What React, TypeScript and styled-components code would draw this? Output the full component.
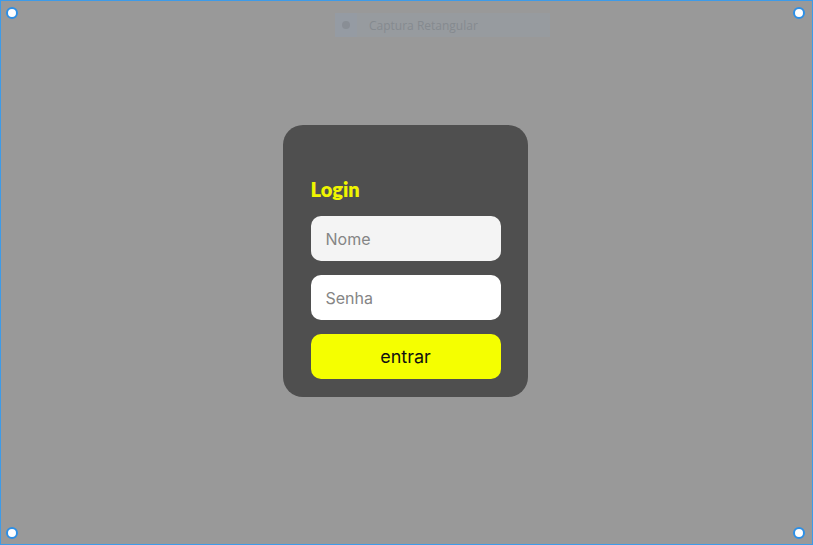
import React from "react";
import styled, { createGlobalStyle } from "styled-components";

const GlobalStyle = createGlobalStyle`
  html, body {
    margin: 0;
    padding: 0;
    height: 100%;
  }
  #root {
    height: 100%;
  }
`;

const Screen = styled.div`
  position: relative;
  box-sizing: border-box;
  width: 813px;
  height: 545px;
  background-color: #999999;
  border: 1px solid #3d9be9;
  display: flex;
  flex-direction: column;
  align-items: center;
  font-family: Inter, "Liberation Sans", sans-serif;
`;

const CaptureBar = styled.div`
  margin-top: 12px;
  margin-left: 72px;
  width: 215px;
  height: 24px;
  display: flex;
  align-items: stretch;
  background-color: #979b9f;
  color: #858a8f;
  font-size: 12px;
`;

const CaptureIcon = styled.div`
  width: 22px;
  display: flex;
  align-items: center;
  justify-content: center;
  background-color: #959ba3;

  span {
    width: 8px;
    height: 8px;
    border-radius: 50%;
    background-color: #898e95;
  }
`;

const CaptureText = styled.div`
  flex: 1;
  display: flex;
  align-items: center;
  padding-left: 11px;
  margin-left: 1px;
  font-family: "Open Sans", sans-serif;
`;

const Handle = styled.div<{ $x: number; $y: number }>`
  position: absolute;
  left: ${(p) => p.$x - 7}px;
  top: ${(p) => p.$y - 6}px;
  width: 8px;
  height: 8px;
  border-radius: 50%;
  background: #ffffff;
  border: 2px solid #2d8fe6;
`;

const Card = styled.form`
  margin-top: 88px;
  margin-left: -3px;
  width: 245px;
  box-sizing: border-box;
  padding: 52px 27px 18px 28px;
  background-color: #4f4f4f;
  border-radius: 20px;
  display: flex;
  flex-direction: column;
  gap: 14px;
`;

const Title = styled.h2`
  margin: 0 0 1px;
  font-family: Lato, "Open Sans", sans-serif;
  font-weight: 800;
  font-size: 20px;
  line-height: 24px;
  color: #f0f500;
`;

const Input = styled.input<{ $shade?: boolean }>`
  box-sizing: border-box;
  width: 190px;
  height: 45px;
  border: none;
  border-radius: 10px;
  padding: 0 15px;
  font-family: Inter, sans-serif;
  font-size: 16px;
  background-color: ${(p) => (p.$shade ? "#f4f4f4" : "#ffffff")};
  outline: none;

  &::placeholder {
    color: #858585;
  }
`;

const Button = styled.button`
  box-sizing: border-box;
  width: 190px;
  height: 45px;
  border: none;
  border-radius: 10px;
  background-color: #f5ff00;
  color: #111111;
  font-family: Inter, sans-serif;
  font-size: 18px;
  cursor: pointer;
`;

const handles = [
  { x: 12, y: 12 },
  { x: 799, y: 12 },
  { x: 12, y: 532 },
  { x: 799, y: 532 },
];

export default function App() {
  return (
    <>
      <GlobalStyle />
      <Screen>
        <CaptureBar>
          <CaptureIcon>
            <span />
          </CaptureIcon>
          <CaptureText>Captura Retangular</CaptureText>
        </CaptureBar>
        <Card onSubmit={(e) => e.preventDefault()}>
          <Title>Login</Title>
          <Input $shade placeholder="Nome" />
          <Input type="password" placeholder="Senha" />
          <Button type="submit">entrar</Button>
        </Card>
        {handles.map((h, i) => (
          <Handle key={i} $x={h.x} $y={h.y} />
        ))}
      </Screen>
    </>
  );
}
